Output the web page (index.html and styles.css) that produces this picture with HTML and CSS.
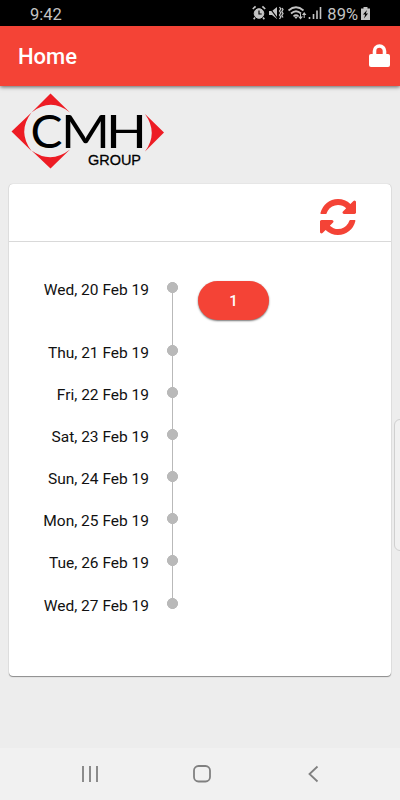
FILE: index.html
```html
<!DOCTYPE html>
<html lang="en">
<head>
    <meta charset="utf-8">
    <title>Home</title>
    <link rel="stylesheet" href="styles.css">
</head>
<body>
    <div class="status-bar">
        <span class="time">9:42</span>
        <svg class="status-icons" width="70" height="16" viewBox="0 0 70 16">
            <!-- alarm -->
            <circle cx="7" cy="8.500" r="4.800" fill="#c4c4c4" stroke="#c4c4c4"/>
            <path d="M.8 4l2.800-2.700M13.200 4l-2.800-2.700M3 12.500l-1.300 1.700M11 12.500l1.300 1.700" fill="none" stroke="#c4c4c4" stroke-width="1.700"/>
            <path d="M7 5.500v3.500h2.700" fill="none" stroke="#000" stroke-width="1.200"/>
            <!-- vibrate -->
            <path d="M17 6h3l5-4v12l-5-4h-3z" fill="#c4c4c4"/>
            <path d="M17 2l9 12" stroke="#000" stroke-width="1.200"/>
            <path d="M27.500 2l1.300 2-1.300 2 1.300 2-1.300 2 1.300 2-1.300 2M30 3l1 1.500-1.200 2 1.200 2-1.200 2 1.200 2" fill="none" stroke="#c4c4c4" stroke-width="1.300"/>
            <!-- wifi -->
            <path d="M36.500 5.500q7.500-6.500 15 0M39 8.500q5-4.500 10 0M41.500 11.300q2.500-2.200 5 0" fill="none" stroke="#c4c4c4" stroke-width="1.700"/>
            <path d="M44 14l-2-2.500h4zM46 11.500h5l-2.500 3zM50 10l2.200-3 2.200 3z" fill="#c4c4c4"/>
            <path d="M52.200 9v4M48.500 9v4" stroke="#c4c4c4"/>
            <!-- signal -->
            <path d="M57.500 12v2M61.500 9v5M65 5.500V14M68.500 2v12" stroke="#c4c4c4" stroke-width="1.600"/>
        </svg>
        <span class="battery-level">89%</span>
        <svg class="battery" width="9" height="13" viewBox="0 0 9 13">
            <path d="M2.500 0h4v1.500H9V13H0V1.500h2.500z" fill="#c4c4c4"/>
            <path d="M6 3L2 7.500h2.200L3 11.500 7 6.500H4.800z" fill="#000"/>
        </svg>
    </div>

    <header class="header">
        <h1 class="title">Home</h1>
        <svg class="lock" width="21" height="24" viewBox="0 0 21 24">
            <path d="M5.500 11V7a5 5 0 0 1 10 0v4" fill="none" stroke="#fff" stroke-width="3.600"/>
            <rect x="0" y="10" width="21" height="13" rx="2" fill="#fff"/>
        </svg>
    </header>

    <main class="content">
        <svg class="logo" width="156" height="78" viewBox="0 0 156 78">
            <g fill="#ed1c24">
                <path d="M42.500 1.500L62 20.500Q43 5 23.500 20.500z"/>
                <path d="M3.500 39.500L23.500 20.500Q9 39.500 23.500 59z"/>
                <path d="M42.500 76.500L23.500 58.500Q43 72.500 62 57.500z"/>
                <path d="M156 40.500L137 22Q150.500 41 137 59.500z"/>
            </g>
            <g class="logo-name">
                <text x="22.500" y="55.500" textLength="32" lengthAdjust="spacingAndGlyphs">C</text>
                <text x="53" y="55.500" textLength="49" lengthAdjust="spacingAndGlyphs">M</text>
                <text x="98" y="55.500" textLength="41" lengthAdjust="spacingAndGlyphs">H</text>
            </g>
            <text class="logo-group" x="80" y="72.500" textLength="53" lengthAdjust="spacingAndGlyphs">GROUP</text>
        </svg>

        <section class="card">
            <div class="card-header">
                <svg class="refresh" width="36" height="36" viewBox="0 128 1536 1536">
                    <path d="M1511 1056q0 5-1 7-64 268-268 434.500t-478 166.500q-146 0-282.500-55t-243.500-157l-129 129q-19 19-45 19t-45-19-19-45v-448q0-26 19-45t45-19h448q26 0 45 19t19 45-19 45l-137 137q71 66 161 102t187 36q134 0 250-65t186-179q11-17 53-117 8-23 30-23h192q13 0 22.500 9.500t9.500 22.500zm25-800v448q0 26-19 45t-45 19h-448q-26 0-45-19t-19-45 19-45l138-138q-148-137-349-137-134 0-250 65t-186 179q-11 17-53 117-8 23-30 23h-199q-13 0-22.500-9.500t-9.500-22.500v-7q65-268 270-434.500t480-166.500q146 0 284 55.500t245 156.500l130-129q19-19 45-19t45 19 19 45z" fill="#f44336"/>
                </svg>
            </div>
            <ul class="timeline">
                <li class="day has-items"><span class="date">Wed, 20 Feb 19</span><span class="dot"></span><button class="count">1</button></li>
                <li class="day"><span class="date">Thu, 21 Feb 19</span><span class="dot"></span></li>
                <li class="day"><span class="date">Fri, 22 Feb 19</span><span class="dot"></span></li>
                <li class="day"><span class="date">Sat, 23 Feb 19</span><span class="dot"></span></li>
                <li class="day"><span class="date">Sun, 24 Feb 19</span><span class="dot"></span></li>
                <li class="day"><span class="date">Mon, 25 Feb 19</span><span class="dot"></span></li>
                <li class="day"><span class="date">Tue, 26 Feb 19</span><span class="dot"></span></li>
                <li class="day"><span class="date">Wed, 27 Feb 19</span><span class="dot"></span></li>
            </ul>
        </section>
    </main>

    <div class="edge-handle"></div>

    <nav class="nav-bar">
        <svg width="18" height="18" viewBox="0 0 18 18"><path d="M2 1v16M9 1v16M16 1v16"/></svg>
        <svg width="18" height="18" viewBox="0 0 18 18"><rect x="1" y="1" width="16" height="15.500" rx="4.500"/></svg>
        <svg width="18" height="18" viewBox="0 0 18 18"><path d="M13.500 1.500L5.500 9l8 7.500"/></svg>
    </nav>
</body>
</html>
```
FILE: styles.css
```css
* {
    box-sizing: border-box;
}

body {
    margin: 0;
    height: 800px;
    display: flex;
    flex-direction: column;
    background: #ededed;
    font-family: Roboto, sans-serif;
    overflow: hidden;
}

.status-bar {
    display: flex;
    align-items: center;
    height: 26px;
    padding: 2px 30px 0 30px;
    background: #000;
    color: #c4c4c4;
    font-size: 16.5px;
}

.status-icons {
    margin-left: auto;
    margin-top: -2px;
}

.battery-level {
    margin: 0 3px 0 5px;
}

.battery {
    margin-top: -1px;
}

.header {
    display: flex;
    align-items: center;
    justify-content: space-between;
    height: 60px;
    padding: 0 10px 0 18px;
    background: #f44336;
    color: #fff;
    box-shadow: 0 1px 4px rgba(0, 0, 0, 0.6);
}

.title {
    margin: 0;
    font-size: 22px;
    font-weight: 500;
}

.content {
    flex: 1;
    padding: 6px 9px 0 8px;
}

.logo {
    display: block;
    margin-bottom: 14px;
}

.logo-name {
    font-family: Lato, sans-serif;
    font-size: 46px;
}

.logo-group {
    font-family: "Liberation Sans", sans-serif;
    font-size: 15px;
    stroke: #000;
    stroke-width: 0.3;
}

.card {
    height: 492px;
    margin-left: 1px;
    background: #fff;
    border-radius: 4px;
    box-shadow: 0 1px 1px rgba(0, 0, 0, 0.4), 0 0 1px rgba(0, 0, 0, 0.3);
}

.card-header {
    display: flex;
    justify-content: flex-end;
    height: 58px;
    padding: 15px 35px 0 0;
    border-bottom: 1px solid #d9d9d9;
}

.timeline {
    margin: 0;
    padding: 38px 0 0;
    list-style: none;
}

.day {
    display: grid;
    grid-template-columns: 140px 11px 73px;
    column-gap: 18px;
    height: 42.1px;
}

.has-items {
    height: 63px;
}

.date {
    padding-top: 1px;
    font-size: 15.5px;
    line-height: 18px;
    text-align: right;
    color: #111;
}

.dot {
    width: 11px;
    background: radial-gradient(circle at 5.5px 7.5px, #b9b9b9 5.2px, transparent 5.8px) 0 0 / 11px 14px no-repeat,
        linear-gradient(#b9b9b9, #b9b9b9) 5px 0 / 1px 100% no-repeat;
}

.day:first-child .dot {
    background-position: 0 0, 5px 7px;
}

.day:last-child .dot {
    height: 13px;
    background-size: 11px 14px, 1px 7px;
}

.count {
    height: 39px;
    margin: 1px 0 0 2px;
    border: 0;
    border-radius: 20px;
    background: #f44336;
    color: #fff;
    font: 500 15px Roboto, sans-serif;
    box-shadow: 0 1px 2px rgba(0, 0, 0, 0.55);
}

.edge-handle {
    position: absolute;
    top: 419px;
    right: -6px;
    width: 12px;
    height: 132px;
    background: #f1f1f1;
    border: 1px solid #d0d0d0;
    border-radius: 6px;
}

.nav-bar {
    display: flex;
    justify-content: space-between;
    align-items: center;
    height: 52px;
    padding: 0 78px 0 81px;
    background: #f1f1f1;
}

.nav-bar svg {
    fill: none;
    stroke: #808080;
    stroke-width: 1.8;
}
```
